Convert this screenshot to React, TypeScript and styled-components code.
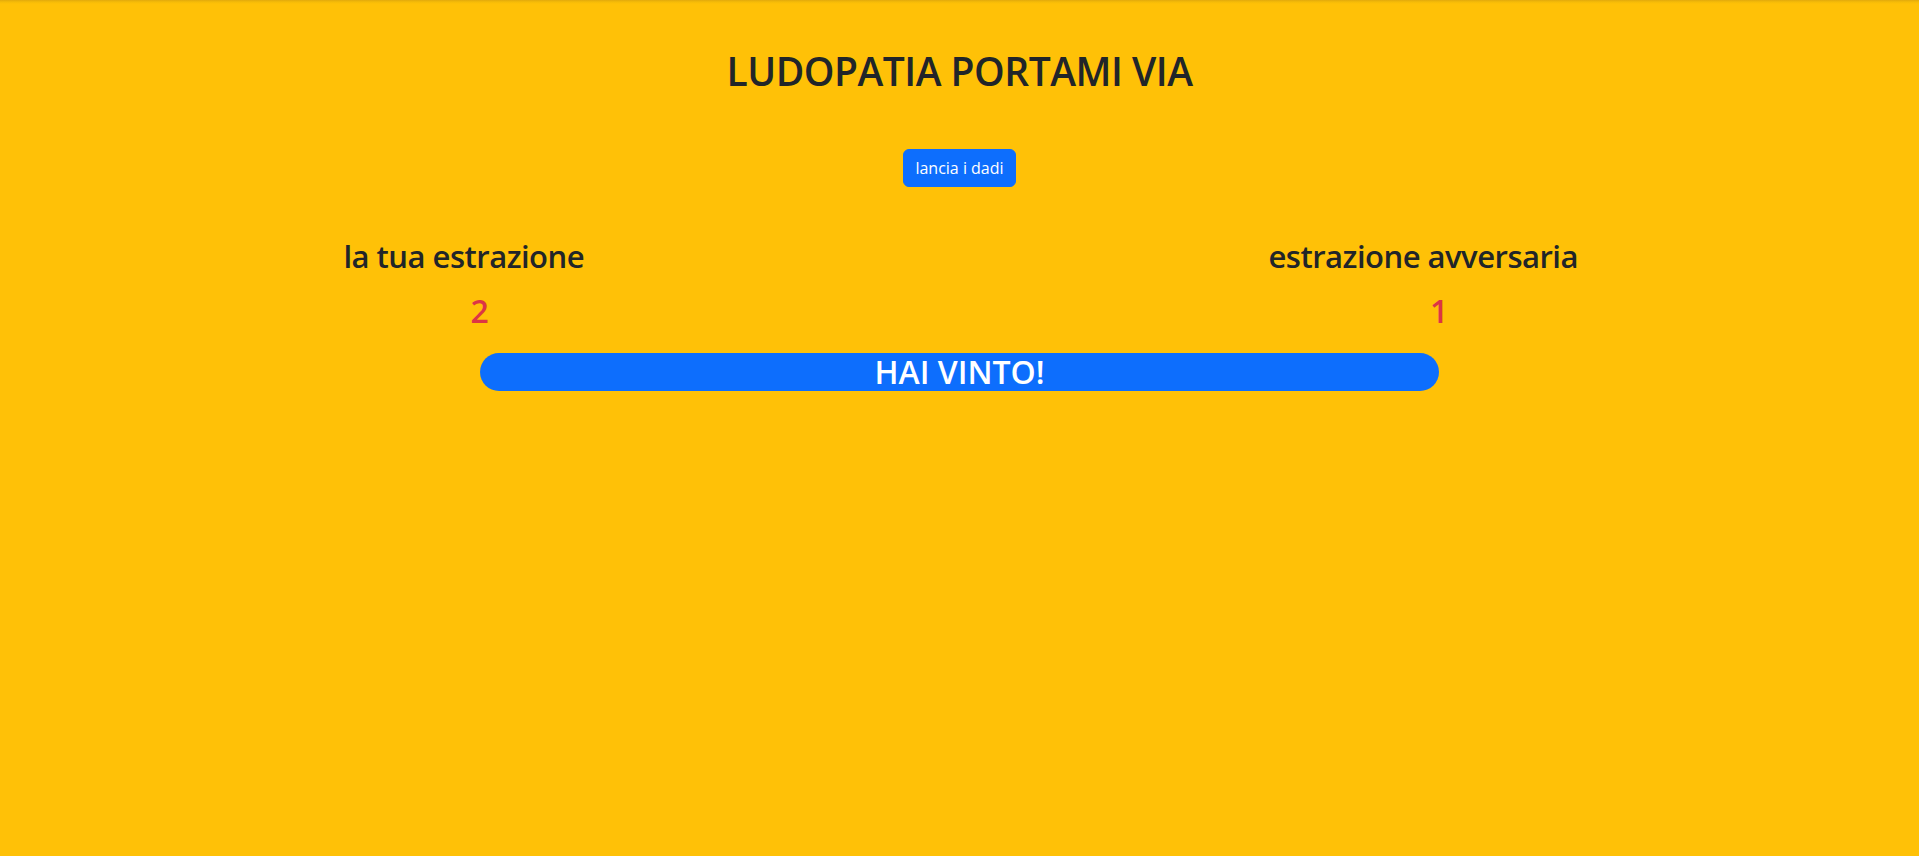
import React from "react";
import styled, { createGlobalStyle } from "styled-components";

const GlobalStyle = createGlobalStyle`
  html, body {
    margin: 0;
    padding: 0;
    min-height: 100%;
  }
  body {
    background: linear-gradient(to bottom, #e2a90c 0px, #f5bb08 2px, #ffc107 4px) #ffc107;
    color: #212529;
    font-family: "Open Sans", "Noto Sans", sans-serif;
    min-height: 856px;
  }
`;

const Page = styled.main`
  display: flex;
  flex-direction: column;
  align-items: center;
  padding-top: 48px;
`;

const Title = styled.h1`
  margin: 0;
  font-size: 39px;
  font-weight: 600;
  letter-spacing: -0.5px;
  line-height: 1.2;
`;

const RollButton = styled.button`
  margin-top: 54px;
  font-family: inherit;
  font-size: 16px;
  line-height: 1.5;
  padding: 6px 11px;
  border: 1px solid #0d6efd;
  border-radius: 6px;
  background: #0d6efd;
  color: #fff;
  cursor: pointer;
`;

const Columns = styled.div`
  align-self: stretch;
  display: grid;
  grid-template-columns: 1fr 1fr;
  margin-top: 51px;
`;

const Column = styled.section`
  display: flex;
  flex-direction: column;
  align-items: center;
`;

const Heading = styled.h2`
  margin: 0;
  padding-right: 32px;
  font-size: 31px;
  font-weight: 600;
  letter-spacing: -0.5px;
  line-height: 1.2;
`;

const Score = styled.h2`
  margin: 17px 0 0;
  font-size: 32px;
  font-weight: 600;
  line-height: 1.2;
  color: #dc3545;
`;

const ResultBar = styled.h2`
  width: 50%;
  margin: 23px 0 0;
  background: #0d6efd;
  color: #fff;
  border-radius: 20px;
  text-align: center;
  font-size: 32px;
  font-weight: 600;
  line-height: 38px;
`;

export default function App() {
  return (
    <>
      <GlobalStyle />
      <Page>
        <Title>LUDOPATIA PORTAMI VIA</Title>
        <RollButton type="button">lancia i dadi</RollButton>
        <Columns>
          <Column>
            <Heading>la tua estrazione</Heading>
            <Score>2</Score>
          </Column>
          <Column>
            <Heading>estrazione avversaria</Heading>
            <Score>1</Score>
          </Column>
        </Columns>
        <ResultBar>HAI VINTO!</ResultBar>
      </Page>
    </>
  );
}
